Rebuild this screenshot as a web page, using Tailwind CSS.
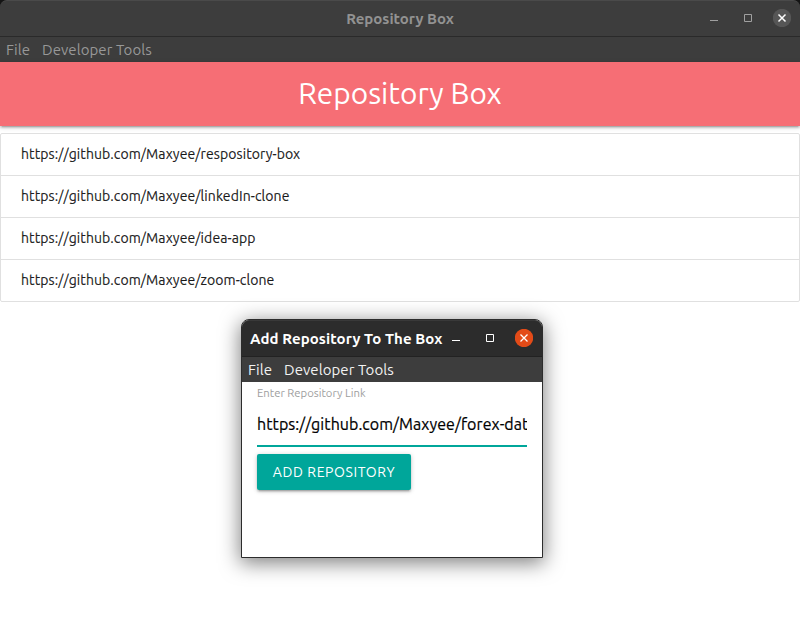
<!DOCTYPE html>
<html lang="en">
<head>
<meta charset="utf-8">
<title>Repository Box</title>
<script src="https://cdn.jsdelivr.net/npm/@tailwindcss/browser@4"></script>
</head>
<body class="w-[800px] h-[637px] overflow-hidden relative bg-white font-['Ubuntu','Noto_Sans',sans-serif] whitespace-nowrap">
<div class="bg-[#141414]">
  <header class="relative h-[37px] bg-[#3d3d3d] border-t border-t-[#4a4a4a] border-b border-b-[#2a2a2a] rounded-t-[7px] flex items-center justify-center">
    <h1 class="text-[15px] leading-[20px] font-bold text-[#929292]">Repository Box</h1>
    <div class="absolute right-[9px] top-[8px] flex gap-[16px]">
      <svg class="size-[18px]" viewBox="0 0 18 18"><path d="M5 11.5h8" stroke="#a0a0a0"/></svg>
      <svg class="size-[18px]" viewBox="0 0 18 18"><path d="M5.500 5.500h7v7h-7z" fill="none" stroke="#a0a0a0"/></svg>
      <svg class="size-[18px]" viewBox="0 0 18 18"><circle cx="9" cy="9" r="9.200" fill="#565656"/><path d="M5.500 5.500l7 7m0-7l-7 7" stroke="#fff" stroke-width="1.500"/></svg>
    </div>
  </header>
  <nav class="h-[25px] bg-[#3d3d3d] flex items-center gap-[12px] px-[6px] pt-[2px] text-[15px] tracking-[0.06px] text-[#989898]">
    <span>File</span><span>Developer Tools</span>
  </nav>
</div>
<div class="relative h-[64px] bg-[#f66e75] text-white text-center text-[29.8px] leading-[62px] shadow-[0_2px_2px_0_rgba(0,0,0,0.14),0_3px_1px_-2px_rgba(0,0,0,0.12),0_1px_5px_0_rgba(0,0,0,0.2)]">Repository Box</div>
<ul class="mt-[7px] border border-[#e0e0e0] rounded-[2px] divide-y divide-[#e0e0e0] text-[14px] tracking-[0.095px] text-black/87 [-webkit-text-stroke:0.2px]">
  <li class="h-[42px] px-[20px] leading-[41px]">https://github.com/Maxyee/respository-box</li>
  <li class="h-[42px] px-[20px] leading-[41px]">https://github.com/Maxyee/linkedIn-clone</li>
  <li class="h-[42px] px-[20px] leading-[41px]">https://github.com/Maxyee/idea-app</li>
  <li class="h-[41px] px-[20px] leading-[41px]">https://github.com/Maxyee/zoom-clone</li>
</ul>
<section class="absolute left-[241px] top-[319px] w-[302px] h-[239px] bg-white border border-[#2c2c2c] rounded-t-[8px] shadow-[0_4px_20px_1px_rgba(0,0,0,0.5)]">
  <header class="relative h-[37px] bg-[#2c2c2c] border-t border-t-[#393939] border-b border-b-[#222] rounded-t-[7px] flex items-center px-[8px]">
    <h2 class="text-[15px] tracking-[0.09px] leading-[20px] font-bold text-white">Add Repository To The Box</h2>
    <div class="absolute right-[9px] top-[8px] flex gap-[16px]">
      <svg class="size-[18px]" viewBox="0 0 18 18"><path d="M5 11.500h8" stroke="#fff"/></svg>
      <svg class="size-[18px]" viewBox="0 0 18 18"><path d="M5.500 5.500h7v7h-7z" fill="none" stroke="#fff"/></svg>
      <svg class="size-[18px]" viewBox="0 0 18 18"><circle cx="9" cy="9" r="9.200" fill="#e34b18"/><path d="M5.500 5.500l7 7m0-7l-7 7" stroke="#fff" stroke-width="1.300"/></svg>
    </div>
  </header>
  <nav class="h-[25px] bg-[#3d3d3d] flex items-center gap-[12px] px-[6px] pt-[2px] text-[15px] tracking-[0.06px] text-[#f2f2f2]">
    <span>File</span><span>Developer Tools</span>
  </nav>
  <div class="px-[15px]">
    <div class="h-[20px] leading-[22px] text-[11.3px] text-[#9e9e9e]">Enter Repository Link</div>
    <div class="h-[45px] leading-[44px] border-b-2 border-[#00a69a] overflow-hidden text-[16px] tracking-[0.06px] text-black [-webkit-text-stroke:0.2px]">https://github.com/Maxyee/forex-dat</div>
    <button class="mt-[7px] block w-[154px] h-[36px] rounded-[2px] bg-[#00a69a] text-white text-[14px] tracking-[0.6px] leading-[36px] shadow-[0_2px_2px_0_rgba(0,0,0,0.14),0_3px_1px_-2px_rgba(0,0,0,0.12),0_1px_5px_0_rgba(0,0,0,0.2)]">ADD REPOSITORY</button>
  </div>
</section>
</body>
</html>
